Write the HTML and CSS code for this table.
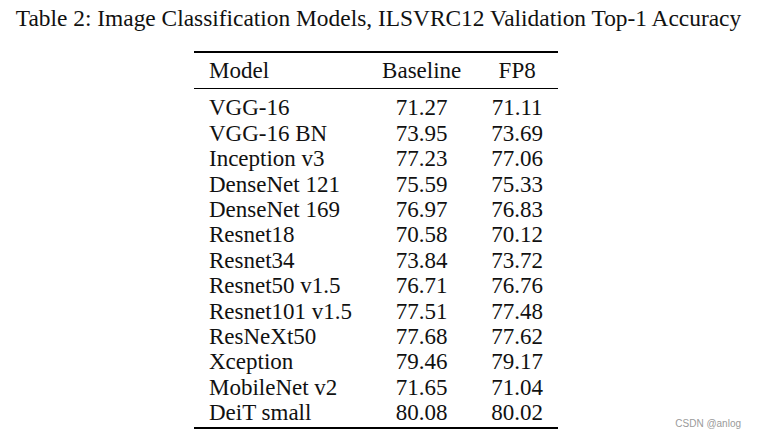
FILE: index.html
```html
<!DOCTYPE html>
<html>
<head>
<meta charset="utf-8">
<link rel="stylesheet" href="styles.css">
</head>
<body>
<div class="page">
  <div class="caption">Table 2: Image Classification Models, ILSVRC12 Validation Top-1 Accuracy</div>
  <table class="results">
    <thead>
      <tr><th class="name">Model</th><th>Baseline</th><th>FP8</th></tr>
    </thead>
    <tbody>
      <tr><td class="name">VGG-16</td><td>71.27</td><td>71.11</td></tr>
      <tr><td class="name">VGG-16 BN</td><td>73.95</td><td>73.69</td></tr>
      <tr><td class="name">Inception v3</td><td>77.23</td><td>77.06</td></tr>
      <tr><td class="name">DenseNet 121</td><td>75.59</td><td>75.33</td></tr>
      <tr><td class="name">DenseNet 169</td><td>76.97</td><td>76.83</td></tr>
      <tr><td class="name">Resnet18</td><td>70.58</td><td>70.12</td></tr>
      <tr><td class="name">Resnet34</td><td>73.84</td><td>73.72</td></tr>
      <tr><td class="name">Resnet50 v1.5</td><td>76.71</td><td>76.76</td></tr>
      <tr><td class="name">Resnet101 v1.5</td><td>77.51</td><td>77.48</td></tr>
      <tr><td class="name">ResNeXt50</td><td>77.68</td><td>77.62</td></tr>
      <tr><td class="name">Xception</td><td>79.46</td><td>79.17</td></tr>
      <tr><td class="name">MobileNet v2</td><td>71.65</td><td>71.04</td></tr>
      <tr><td class="name">DeiT small</td><td>80.08</td><td>80.02</td></tr>
    </tbody>
  </table>
  <div class="watermark">CSDN @anlog</div>
</div>
</body>
</html>
```
FILE: styles.css
```css
html, body {
  margin: 0;
  padding: 0;
  background: #fff;
}
.page {
  position: relative;
  width: 757px;
  height: 440px;
  display: flex;
  flex-direction: column;
  align-items: center;
  font-family: "Liberation Serif", "Times New Roman", serif;
  color: #111;
}
.caption {
  font-size: 23.4px;
  line-height: 25px;
  padding-top: 6px;
  white-space: nowrap;
}
.results {
  margin-top: 20px;
  margin-left: -5px;
  border-collapse: collapse;
  font-size: 23px;
  line-height: 25.4px;
  border-top: 2px solid #000;
  border-bottom: 2px solid #000;
}
.results th,
.results td {
  padding: 0 15px;
  text-align: center;
  font-weight: normal;
  white-space: nowrap;
}
.results th.name,
.results td.name {
  text-align: left;
}
.results thead th {
  padding-top: 5px;
  padding-bottom: 5px;
  border-bottom: 1px solid #000;
}
.results tbody tr:first-child td {
  padding-top: 6px;
}
.results tbody tr:last-child td {
  padding-bottom: 1px;
}
.watermark {
  position: absolute;
  right: 16px;
  bottom: 11px;
  font-family: "Liberation Sans", Arial, sans-serif;
  font-size: 10px;
  color: #9a9a9a;
}
```
